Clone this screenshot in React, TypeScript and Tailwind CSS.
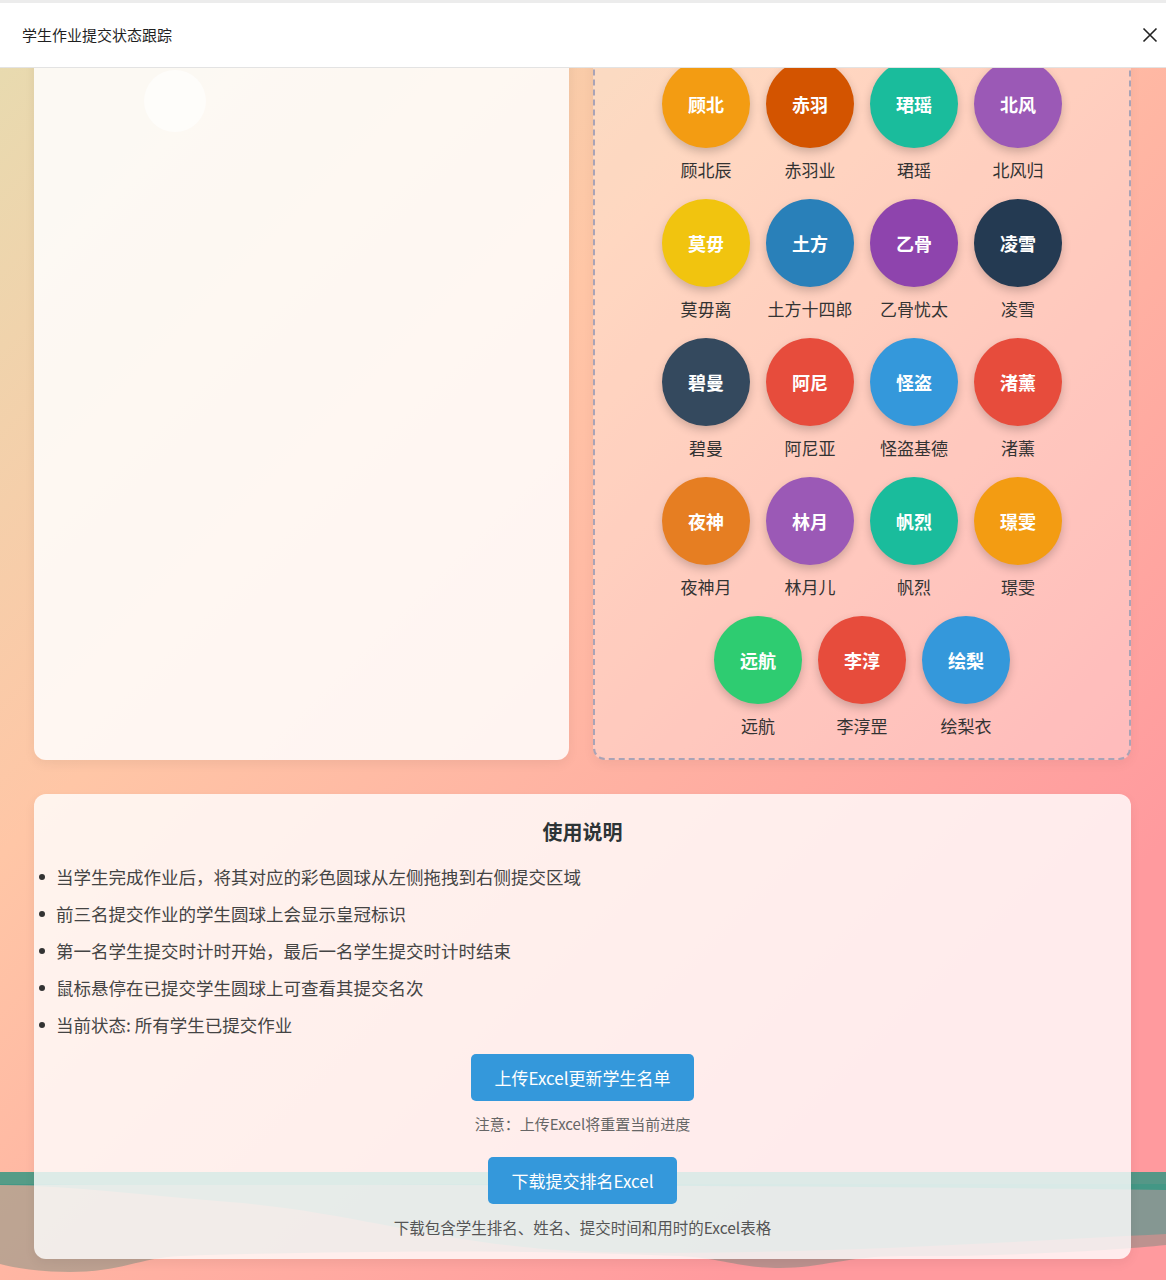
import React from "react";

type Student = {
  short: string;
  name: string;
  color: string;
};

const students: Student[] = [
  { short: "顾北", name: "顾北辰", color: "bg-[#f39c12]" },
  { short: "赤羽", name: "赤羽业", color: "bg-[#d35400]" },
  { short: "珺瑶", name: "珺瑶", color: "bg-[#1abc9c]" },
  { short: "北风", name: "北风归", color: "bg-[#9b59b6]" },
  { short: "莫毋", name: "莫毋离", color: "bg-[#f1c40f]" },
  { short: "土方", name: "土方十四郎", color: "bg-[#2980b9]" },
  { short: "乙骨", name: "乙骨忧太", color: "bg-[#8e44ad]" },
  { short: "凌雪", name: "凌雪", color: "bg-[#243a52]" },
  { short: "碧曼", name: "碧曼", color: "bg-[#34495e]" },
  { short: "阿尼", name: "阿尼亚", color: "bg-[#e74c3c]" },
  { short: "怪盗", name: "怪盗基德", color: "bg-[#3498db]" },
  { short: "渚薰", name: "渚薰", color: "bg-[#e74c3c]" },
  { short: "夜神", name: "夜神月", color: "bg-[#e67e22]" },
  { short: "林月", name: "林月儿", color: "bg-[#9b59b6]" },
  { short: "帆烈", name: "帆烈", color: "bg-[#1abc9c]" },
  { short: "璟雯", name: "璟雯", color: "bg-[#f39c12]" },
  { short: "远航", name: "远航", color: "bg-[#2ecc71]" },
  { short: "李淳", name: "李淳罡", color: "bg-[#e74c3c]" },
  { short: "绘梨", name: "绘梨衣", color: "bg-[#3498db]" },
];

const tips = [
  "当学生完成作业后，将其对应的彩色圆球从左侧拖拽到右侧提交区域",
  "前三名提交作业的学生圆球上会显示皇冠标识",
  "第一名学生提交时计时开始，最后一名学生提交时计时结束",
  "鼠标悬停在已提交学生圆球上可查看其提交名次",
  "当前状态: 所有学生已提交作业",
];

function Waves() {
  return (
    <svg
      className="absolute bottom-0 left-0 z-0 h-[108px] w-full"
      viewBox="0 0 1166 108"
      preserveAspectRatio="none"
    >
      <path
        d="M0,12 H1166 V73 C1120,78 1000,85 900,84 C850,84 820,96 780,96 C740,96 720,86 680,84 C500,76 300,80 180,84 C140,86 120,100 70,100 C40,100 15,96 0,92 Z"
        fill="rgba(90,135,120,0.4)"
      />
      <path
        d="M0,12 H1166 V62 C1000,70 800,84 600,80 C450,76 360,40 230,30 C150,24 80,14 0,13 Z"
        fill="rgba(50,160,150,0.4)"
      />
      <path d="M0,0 H1166 V18 C900,14 400,12 0,13 Z" fill="rgba(55,150,130,0.85)" />
    </svg>
  );
}

function StudentBall({ s }: { s: Student }) {
  return (
    <div className="flex w-[88px] flex-col items-center">
      <div
        className={`flex h-[88px] w-[88px] items-center justify-center rounded-full ${s.color} text-[18px] font-bold text-white shadow-[0_4px_10px_rgba(0,0,0,0.2)]`}
      >
        {s.short}
      </div>
      <div className="mt-2 whitespace-nowrap text-[17px] leading-[28px] text-[#333]">{s.name}</div>
    </div>
  );
}

export default function App() {
  return (
    <div className="relative h-[1280px] w-full overflow-hidden bg-[linear-gradient(135deg,#e6dcb0_0%,#ffc6a6_35%,#ff9a9e_82%)] font-['Noto_Sans_CJK_SC','Noto_Sans',sans-serif]">
      <header className="absolute inset-x-0 top-0 z-20 flex h-[68px] items-center justify-between border-b border-t-[3px] border-b-[#e3e3e3] border-t-[#ececec] bg-white pl-[22px] pr-[8px]">
        <span className="text-[15px] text-[#1f1f1f]">学生作业提交状态跟踪</span>
        <svg width="16" height="16" viewBox="0 0 16 16" className="text-[#222]">
          <path d="M1.5 1.5 L14.5 14.5 M14.5 1.5 L1.5 14.5" stroke="currentColor" strokeWidth="1.6" />
        </svg>
      </header>

      <Waves />

      <main className="relative z-10 pl-[34px] pr-[35px] pt-[40px]">
        <div className="grid grid-cols-[535px_1fr] gap-6">
          <div className="relative rounded-xl bg-white/85 shadow-[0_4px_12px_rgba(0,0,0,0.06)]">
            <div className="absolute left-[110px] top-[30px] h-[62px] w-[62px] rounded-full bg-white/60" />
          </div>

          <div className="rounded-xl border-2 border-dashed border-[#a9a3b6] bg-white/30 px-5 pb-[18px] pt-[18px] shadow-[0_4px_12px_rgba(0,0,0,0.05)]">
            <div className="flex flex-wrap justify-center gap-x-4 gap-y-[15px]">
              {students.map((s) => (
                <StudentBall key={s.name} s={s} />
              ))}
            </div>
          </div>
        </div>

        <section className="mt-[34px] rounded-xl bg-white/80 px-5 pb-[21px] pt-6 shadow-[0_4px_12px_rgba(0,0,0,0.06)]">
          <h2 className="text-center text-[20px] font-bold leading-[28px] text-[#2d3436]">使用说明</h2>
          <ul className="-ml-[15px] mt-4">
            {tips.map((t, i) => (
              <li
                key={t}
                className={`flex items-center text-[17.5px] leading-[29px] text-[#444] ${i < tips.length - 1 ? "mb-2" : ""}`}
              >
                <span className="mr-[11px] h-[6px] w-[6px] shrink-0 rounded-full bg-[#333]" />
                {t}
              </li>
            ))}
          </ul>

          <div className="mt-[15px] flex flex-col items-center">
            <button
              type="button"
              className="h-[47px] rounded-[5px] bg-[#3498db] px-[23px] text-[17px] text-white"
            >
              上传Excel更新学生名单
            </button>
            <p className="mt-3 text-[15px] leading-[22px] text-[#666]">注意：上传Excel将重置当前进度</p>
            <button
              type="button"
              className="mt-[22px] h-[47px] rounded-[5px] bg-[#3498db] px-[23px] text-[17px] text-white"
            >
              下载提交排名Excel
            </button>
            <p className="mt-3 text-[15.5px] leading-[22px] text-[#555]">
              下载包含学生排名、姓名、提交时间和用时的Excel表格
            </p>
          </div>
        </section>
      </main>
    </div>
  );
}
